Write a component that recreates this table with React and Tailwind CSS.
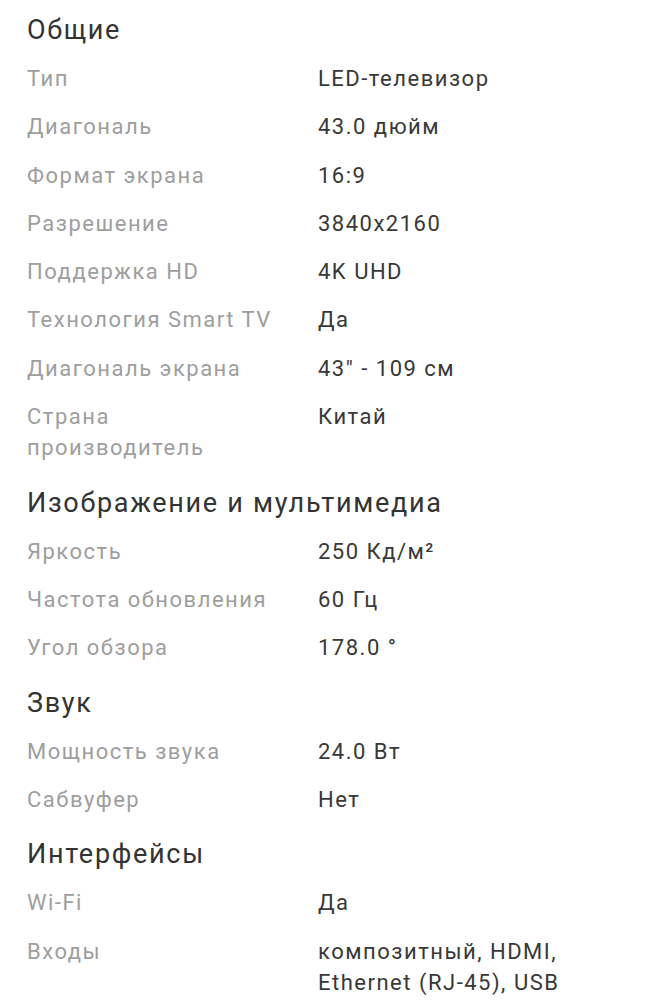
import React from 'react';

const sections = [
  {
    title: 'Общие',
    rows: [
      ['Тип', 'LED-телевизор'],
      ['Диагональ', '43.0 дюйм'],
      ['Формат экрана', '16:9'],
      ['Разрешение', '3840x2160'],
      ['Поддержка HD', '4K UHD'],
      ['Технология Smart TV', 'Да'],
      ['Диагональ экрана', '43" - 109 см'],
      ['Страна производитель', 'Китай'],
    ],
  },
  {
    title: 'Изображение и мультимедиа',
    rows: [
      ['Яркость', '250 Кд/м²'],
      ['Частота обновления', '60 Гц'],
      ['Угол обзора', '178.0 °'],
    ],
  },
  {
    title: 'Звук',
    rows: [
      ['Мощность звука', '24.0 Вт'],
      ['Сабвуфер', 'Нет'],
    ],
  },
  {
    title: 'Интерфейсы',
    rows: [
      ['Wi-Fi', 'Да'],
      ['Входы', 'композитный, HDMI, Ethernet (RJ-45), USB'],
    ],
  },
];

export default function App() {
  return (
    <div className="min-h-screen bg-white font-['Roboto',sans-serif] pl-[27px] pr-[27px] pt-3 pb-6">
      {sections.map((s, i) => (
        <section key={s.title} className={i > 0 ? 'mt-[21.5px]' : ''}>
          <h2 className="text-[27px] leading-[36px] tracking-[1.7px] text-[#333333] mb-[15px]">{s.title}</h2>
          <div className="flex flex-col gap-[17.3px]">
            {s.rows.map(([label, value]) => (
              <div key={label} className="grid grid-cols-[291px_1fr] text-[22px] leading-[31px] tracking-[1.5px]">
                <span className="pr-[42px] text-[#9e9e9e]">{label}</span>
                <span className="text-[#383838]">{value}</span>
              </div>
            ))}
          </div>
        </section>
      ))}
    </div>
  );
}
